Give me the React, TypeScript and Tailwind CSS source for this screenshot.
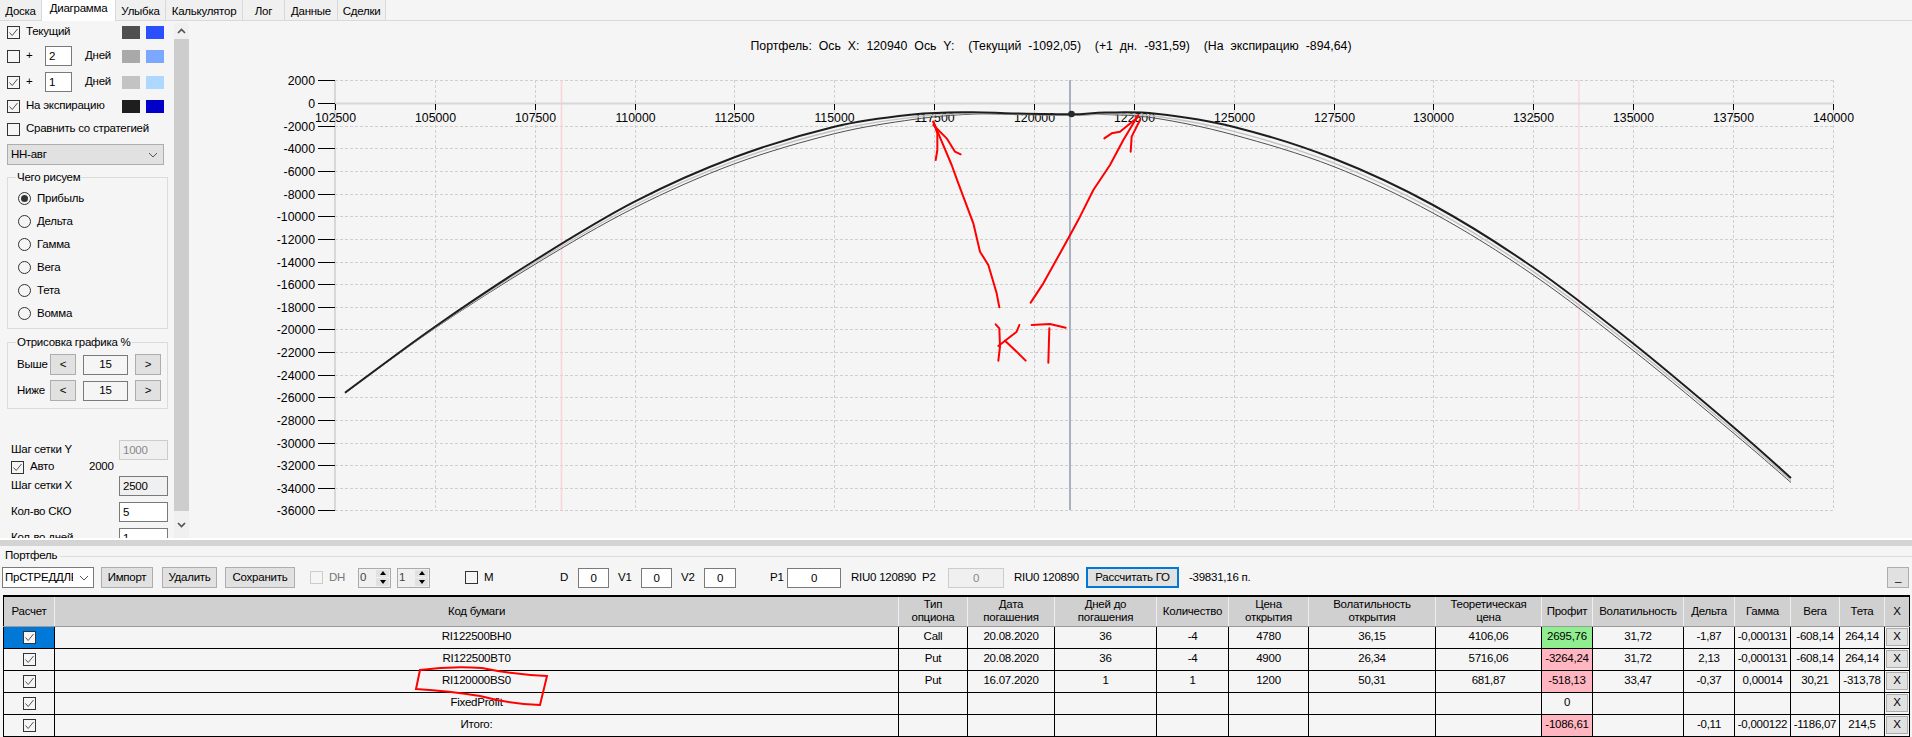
const tabs = [
  { label: 'Доска', className: 'w-[42px]' },
  { label: 'Диаграмма', className: 'w-[74px]', active: true },
  { label: 'Улыбка', className: 'w-[50px]' },
  { label: 'Калькулятор', className: 'w-[77px]' },
  { label: 'Лог', className: 'w-[42px]' },
  { label: 'Данные', className: 'w-[53px]' },
  { label: 'Сделки', className: 'w-[48px]' },
];

// page coordinates of the expiry curve: x, y, offset of the "current" curve below it
const curve = [
  [345, 392.7, 0.5], [435, 326.7, 1.5], [535.5, 260, 4], [634.6, 201.7, 6], [734.5, 157.3, 6.5], [834.4, 126.7, 7],
  [913, 114.5, 5], [970, 112.2, 2], [1013, 113.5, 1], [1071, 114.3, 1], [1106, 112.6, 2], [1156, 113.8, 4.5],
  [1233, 126.7, 8], [1333, 158.3, 8], [1433, 205, 8], [1533, 267.3, 7.5], [1633, 343.3, 7], [1733, 426.7, 6],
  [1791, 478, 4.5],
];

function smoothPath(k: number) {
  const p = curve.map(([x, y, d]) => [x, y + d * k]);
  let d = `M${p[0][0]} ${p[0][1]}`;
  for (let i = 0; i < p.length - 1; i++) {
    const a = p[i - 1] ?? p[i];
    const b = p[i];
    const c = p[i + 1];
    const e = p[i + 2] ?? c;
    d += ` C${b[0] + (c[0] - a[0]) / 6} ${b[1] + (c[1] - a[1]) / 6} ${c[0] - (e[0] - b[0]) / 6} ${c[1] - (e[1] - b[1]) / 6} ${c[0]} ${c[1]}`;
  }
  return d;
}

const yTicks = [80, 103, 126, 148, 171, 194, 216, 239, 262, 284, 307, 329, 352, 375, 397, 420, 443, 465, 488, 510];
const xTicks = Array.from({ length: 16 }, (_, i) => ({
  x: Math.round(335 + i * 99.85),
  label: 102500 + i * 2500,
}));

// freehand marks, in 3x crop coordinates around (880, 70)
const marks = [
  [[358, 712], [350, 670], [325, 585], [300, 545], [280, 460], [235, 340], [215, 285], [160, 155]],
  [[160, 155], [172, 190], [172, 240], [167, 270]],
  [[160, 165], [200, 205], [225, 245], [242, 253]],
  [[452, 698], [490, 640], [565, 505], [600, 440], [640, 360], [690, 285], [730, 210], [775, 135]],
  [[775, 140], [720, 185], [695, 190], [673, 205]],
  [[780, 150], [755, 200], [752, 245]],
  [[347, 763], [358, 775], [360, 830], [355, 872]],
  [[418, 765], [410, 785], [355, 828]],
  [[375, 812], [410, 845], [437, 872]],
  [[455, 765], [510, 762], [557, 773]],
  [[508, 775], [505, 878]],
];

function Chart() {
  return (
    <svg viewBox="190 71 1722 467" className="h-[467px] w-[1722px] text-[12.3px] tracking-normal">
      {yTicks.map((y, i) =>
        i === 1 ? null : <line key={y} x1="335" x2="1833" y1={y + 0.5} y2={y + 0.5} stroke="#cfcfcf" strokeDasharray="3 2" />
      )}
      {xTicks.map((t) => (
        <line key={t.x} x1={t.x + 0.5} x2={t.x + 0.5} y1="80" y2="510" stroke="#cfcfcf" strokeDasharray="3 2" />
      ))}
      <line x1="561.5" x2="561.5" y1="80" y2="510" stroke="#f8d3d8" strokeWidth="1.5" />
      <line x1="1579" x2="1579" y1="80" y2="510" stroke="#f8d3d8" strokeWidth="1.2" />
      <line x1="335" x2="335" y1="80" y2="510" stroke="#d8d8d8" strokeWidth="2" />
      <line x1="335" x2="1833" y1="103.5" y2="103.5" stroke="#d8d8d8" strokeWidth="2" />
      {yTicks.map((y, i) => (
        <g key={y}>
          <line x1="318" x2="335" y1={y + 0.5} y2={y + 0.5} stroke="#000" />
          <text x="315" y={y + 4.5} textAnchor="end" fill="#000">{2000 - i * 2000}</text>
        </g>
      ))}
      {xTicks.map((t) => (
        <g key={t.label}>
          <line x1={t.x + 0.5} x2={t.x + 0.5} y1="104" y2="110" stroke="#000" />
          <text x={t.x + 0.5} y="121.5" textAnchor="middle" fill="#000">{t.label}</text>
        </g>
      ))}
      <path d={smoothPath(1)} fill="none" stroke="#505050" strokeWidth="1" />
      <path d={smoothPath(0.55)} fill="none" stroke="#c3c3c3" strokeWidth="1.4" />
      <path d={smoothPath(0)} fill="none" stroke="#1e1e1e" strokeWidth="2" />
      <line x1="1070" x2="1070" y1="80" y2="510" stroke="#a9b0c0" strokeWidth="2" />
      <circle cx="1071.5" cy="114" r="3.3" fill="#2a2a2a" />
      {marks.map((m, i) => (
        <polyline
          key={i}
          points={m.map(([x, y]) => `${880 + x / 3},${70 + y / 3}`).join(' ')}
          fill="none"
          stroke="#ff0000"
          strokeWidth="2"
          strokeLinecap="round"
          strokeLinejoin="round"
        />
      ))}
    </svg>
  );
}

function Check({ checked = false, disabled = false, className = '' }: { checked?: boolean; disabled?: boolean; className?: string }) {
  return (
    <span
      className={`inline-flex h-[13px] w-[13px] shrink-0 items-center justify-center border ${
        disabled ? 'border-[#cccccc]' : 'border-[#333333]'
      } ${className}`}
    >
      {checked && (
        <svg viewBox="0 0 11 11" className="h-[11px] w-[11px]">
          <path d="M1.5 5.5 L4.2 8.5 L9.5 2" fill="none" stroke="#555555" strokeWidth="1" />
        </svg>
      )}
    </span>
  );
}

function Swatches({ dark, blue }: { dark: string; blue: string }) {
  return (
    <span className="ml-auto flex gap-[6px]">
      <span className={`h-[13px] w-[18px] ${dark}`} />
      <span className={`h-[13px] w-[18px] ${blue}`} />
    </span>
  );
}

function Field({ value, className = '' }: { value: string; className?: string }) {
  return (
    <input
      readOnly
      value={value}
      className={`h-[20px] border border-[#7a7a7a] bg-white px-[3px] outline-none ${className}`}
    />
  );
}

function Btn({ children, className = '' }: { children: React.ReactNode; className?: string }) {
  return (
    <button className={`flex h-[21px] shrink-0 items-center justify-center border border-[#adadad] bg-[#e1e1e1] ${className}`}>
      {children}
    </button>
  );
}

function Radio({ label, checked = false }: { label: string; checked?: boolean }) {
  return (
    <div className="flex h-[23px] items-center pl-[10px]">
      <span className="flex h-[13px] w-[13px] items-center justify-center rounded-full border border-[#333333]">
        {checked && <span className="h-[7px] w-[7px] rounded-full bg-[#333333]" />}
      </span>
      <span className="ml-[6px]">{label}</span>
    </div>
  );
}

function Group({ title, className, children }: { title: string; className: string; children: React.ReactNode }) {
  return (
    <div className={`relative ml-[7px] w-[161px] border border-[#dcdcdc] ${className}`}>
      <span className="absolute left-[8px] top-[-9px] bg-[#f5f5f5] px-px leading-[16px]">{title}</span>
      {children}
    </div>
  );
}

function Percent({ label, className }: { label: string; className: string }) {
  return (
    <div className={`flex items-center pl-[9px] ${className}`}>
      <span className="w-[33px]">{label}</span>
      <Btn className="w-[26px]">&lt;</Btn>
      <span className="ml-[7px] flex h-[20px] w-[45px] items-center justify-center border border-[#7a7a7a]">15</span>
      <Btn className="ml-[7px] w-[26px]">&gt;</Btn>
    </div>
  );
}

function Sidebar() {
  return (
    <div className="flex w-[190px] shrink-0">
      <div className="h-[517px] w-[174px] shrink-0 overflow-hidden pt-px">
        <div className="flex h-[20px] items-center pl-[7px] pr-[10px]">
          <Check checked />
          <span className="ml-[6px]">Текущий</span>
          <Swatches dark="bg-[#505050]" blue="bg-[#2a4fff]" />
        </div>
        <div className="mt-[4px] flex h-[20px] items-center pl-[7px] pr-[10px]">
          <Check />
          <span className="ml-[6px] w-[19px]">+</span>
          <Field value="2" className="w-[27px]" />
          <span className="ml-[13px]">Дней</span>
          <Swatches dark="bg-[#a9a9a9]" blue="bg-[#7ba7ff]" />
        </div>
        <div className="mt-[6px] flex h-[20px] items-center pl-[7px] pr-[10px]">
          <Check checked />
          <span className="ml-[6px] w-[19px]">+</span>
          <Field value="1" className="w-[27px]" />
          <span className="ml-[13px]">Дней</span>
          <Swatches dark="bg-[#c3c3c3]" blue="bg-[#add8ff]" />
        </div>
        <div className="mt-[4px] flex h-[20px] items-center pl-[7px] pr-[10px]">
          <Check checked />
          <span className="ml-[6px]">На экспирацию</span>
          <Swatches dark="bg-[#1e1e1e]" blue="bg-[#0000c8]" />
        </div>
        <div className="mt-[3px] flex h-[20px] items-center pl-[7px]">
          <Check />
          <span className="ml-[6px]">Сравнить со стратегией</span>
        </div>
        <div className="ml-[7px] mt-[5px] flex h-[21px] w-[157px] items-center justify-between border border-[#adadad] bg-[#e1e1e1] pl-[3px] pr-[5px]">
          <span>НН-авг</span>
          <svg viewBox="0 0 10 6" className="h-[6px] w-[10px]">
            <path d="M1 1 L5 5 L9 1" fill="none" stroke="#555555" />
          </svg>
        </div>
        <Group title="Чего рисуем" className="mt-[12px] h-[152px] pt-[9px]">
          <Radio label="Прибыль" checked />
          <Radio label="Дельта" />
          <Radio label="Гамма" />
          <Radio label="Вега" />
          <Radio label="Тета" />
          <Radio label="Вомма" />
        </Group>
        <Group title="Отрисовка графика %" className="mt-[13px] h-[67px] pt-[11px]">
          <Percent label="Выше" className="" />
          <Percent label="Ниже" className="mt-[5px]" />
        </Group>
        <div className="ml-[11px] mt-[31px] flex h-[20px] w-[157px] items-center justify-between">
          <span>Шаг сетки Y</span>
          <input readOnly value="1000" className="h-[20px] w-[49px] border border-[#cccccc] bg-[#f0f0f0] px-[3px] text-[#888888] outline-none" />
        </div>
        <div className="ml-[11px] mt-[-2px] flex h-[18px] items-center">
          <Check checked />
          <span className="ml-[6px] w-[59px]">Авто</span>
          <span>2000</span>
        </div>
        <div className="ml-[11px] flex h-[20px] w-[157px] items-center justify-between">
          <span>Шаг сетки X</span>
          <Field value="2500" className="w-[49px] !bg-[#f0f0f0]" />
        </div>
        <div className="ml-[11px] mt-[6px] flex h-[20px] w-[157px] items-center justify-between">
          <span>Кол-во СКО</span>
          <Field value="5" className="w-[49px]" />
        </div>
        <div className="ml-[11px] mt-[6px] flex h-[20px] w-[157px] items-center justify-between">
          <span>Кол-во дней</span>
          <Field value="1" className="w-[49px]" />
        </div>
      </div>
      <div className="mt-[2px] flex h-[515px] w-[15px] flex-col bg-[#f0f0f0]">
        <div className="flex h-[16px] items-center justify-center">
          <svg viewBox="0 0 9 6" className="h-[6px] w-[9px]">
            <path d="M1 5 L4.5 1.5 L8 5" fill="none" stroke="#505050" strokeWidth="1.6" />
          </svg>
        </div>
        <div className="h-[472px] bg-[#cdcdcd]" />
        <div className="flex flex-1 items-center justify-center">
          <svg viewBox="0 0 9 6" className="h-[6px] w-[9px]">
            <path d="M1 1 L4.5 4.5 L8 1" fill="none" stroke="#505050" strokeWidth="1.6" />
          </svg>
        </div>
      </div>
    </div>
  );
}

function Spin({ value, className = '' }: { value: string; className?: string }) {
  return (
    <span className={`flex h-[20px] w-[33px] shrink-0 items-center justify-between border border-[#aaaaaa] bg-[#f0f0f0] pl-px ${className}`}>
      <span className="text-[#444444]">{value}</span>
      <span className="flex h-full w-[15px] flex-col gap-px p-px">
        <span className="flex flex-1 items-center justify-center bg-[#e1e1e1]">
          <span className="h-0 w-0 border-x-[3px] border-b-[4px] border-x-transparent border-b-black" />
        </span>
        <span className="flex flex-1 items-center justify-center bg-[#e1e1e1]">
          <span className="h-0 w-0 border-x-[3px] border-t-[4px] border-x-transparent border-t-black" />
        </span>
      </span>
    </span>
  );
}

function Toolbar() {
  return (
    <div className="flex h-[23px] items-center">
      <div className="ml-[2px] flex h-[21px] w-[92px] shrink-0 items-center justify-between border border-[#7a7a7a] bg-white pl-[2px] pr-[4px]">
        <span className="w-[68px] overflow-hidden whitespace-nowrap">ПрСТРЕДДЛЕ</span>
        <svg viewBox="0 0 10 6" className="h-[6px] w-[10px] shrink-0">
          <path d="M1 1 L5 5 L9 1" fill="none" stroke="#555555" />
        </svg>
      </div>
      <Btn className="ml-[7px] w-[52px]">Импорт</Btn>
      <Btn className="ml-[9px] w-[55px]">Удалить</Btn>
      <Btn className="ml-[8px] w-[70px]">Сохранить</Btn>
      <Check disabled className="ml-[15px]" />
      <span className="ml-[6px] w-[20px] text-[#777777]">DH</span>
      <Spin value="0" className="ml-[9px]" />
      <Spin value="1" className="ml-[6px]" />
      <Check className="ml-[35px]" />
      <span className="ml-[6px] w-[10px]">M</span>
      <span className="ml-[66px] w-[10px]">D</span>
      <Field value="0" className="ml-[8px] w-[31px] text-center" />
      <span className="ml-[9px] w-[16px]">V1</span>
      <Field value="0" className="ml-[7px] w-[31px] text-center" />
      <span className="ml-[9px] w-[16px]">V2</span>
      <Field value="0" className="ml-[7px] w-[32px] text-center" />
      <span className="ml-[34px] w-[12px]">P1</span>
      <Field value="0" className="ml-[5px] w-[54px] text-center" />
      <span className="ml-[10px] w-[64px] whitespace-nowrap">RIU0 120890</span>
      <span className="ml-[7px] w-[14px]">P2</span>
      <input readOnly value="0" className="ml-[12px] h-[20px] w-[56px] border border-[#cccccc] bg-[#f0f0f0] text-center text-[#888888] outline-none" />
      <span className="ml-[10px] w-[64px] whitespace-nowrap">RIU0 120890</span>
      <Btn className="ml-[8px] w-[93px] border-2 !border-[#0078d7]">Рассчитать ГО</Btn>
      <span className="ml-[10px] w-[62px] whitespace-nowrap">-39831,16 п.</span>
      <Btn className="ml-auto mr-[3px] w-[22px] items-end pb-[1px]">_</Btn>
    </div>
  );
}

const columns = [
  { title: ['Расчет'], className: 'w-[51px]' },
  { title: ['Код бумаги'], className: 'w-[844px]' },
  { title: ['Тип', 'опциона'], className: 'w-[69px]' },
  { title: ['Дата', 'погашения'], className: 'w-[87px]' },
  { title: ['Дней до', 'погашения'], className: 'w-[102px]' },
  { title: ['Количество'], className: 'w-[72px]' },
  { title: ['Цена', 'открытия'], className: 'w-[80px]' },
  { title: ['Волатильность', 'открытия'], className: 'w-[127px]' },
  { title: ['Теоретическая', 'цена'], className: 'w-[106px]' },
  { title: ['Профит'], className: 'w-[51px]' },
  { title: ['Волатильность'], className: 'w-[91px]' },
  { title: ['Дельта'], className: 'w-[51px]' },
  { title: ['Гамма'], className: 'w-[56px]' },
  { title: ['Вега'], className: 'w-[49px]' },
  { title: ['Тета'], className: 'w-[45px]' },
  { title: ['X'], className: 'w-[25px]' },
];

const rows = [
  ['RI122500BH0', 'Call', '20.08.2020', '36', '-4', '4780', '36,15', '4106,06', '2695,76', '31,72', '-1,87', '-0,000131', '-608,14', '264,14'],
  ['RI122500BT0', 'Put', '20.08.2020', '36', '-4', '4900', '26,34', '5716,06', '-3264,24', '31,72', '2,13', '-0,000131', '-608,14', '264,14'],
  ['RI120000BS0', 'Put', '16.07.2020', '1', '1', '1200', '50,31', '681,87', '-518,13', '33,47', '-0,37', '0,00014', '30,21', '-313,78'],
  ['FixedProfit', '', '', '', '', '', '', '', '0', '', '', '', '', ''],
  ['Итого:', '', '', '', '', '', '', '', '-1086,61', '', '-0,11', '-0,000122', '-1186,07', '214,5'],
];

function profitClass(value: string) {
  if (value === '0') return '';
  return value.startsWith('-') ? 'bg-[#ffb6c1]' : 'bg-[#90ee90]';
}

function PortfolioTable() {
  return (
    <table className="ml-[3px] mt-[6px] w-[1906px] table-fixed border-collapse whitespace-nowrap text-center">
      <colgroup>
        {columns.map((c) => (
          <col key={c.title.join()} className={c.className} />
        ))}
      </colgroup>
      <thead>
        <tr className="h-[30px] bg-[#d0d0d0]">
          {columns.map((c) => (
            <th
              key={c.title.join()}
              className="border-b border-r border-t-2 border-b-[#9a9a9a] border-r-[#efefef] border-t-black p-0 font-normal leading-[13px] first:border-l first:border-l-black last:border-r-black"
            >
              {c.title.map((line) => (
                <div key={line}>{line}</div>
              ))}
            </th>
          ))}
        </tr>
      </thead>
      <tbody>
        {rows.map((row, r) => (
          <tr key={row[0]} className="h-[22px]">
            <td className={`border border-black p-0 ${r === 0 ? 'bg-[#0078d7]' : ''}`}>
              <span className="flex items-center justify-center">
                <Check checked className={r === 0 ? 'bg-[#f5f5f5]' : ''} />
              </span>
            </td>
            {row.map((cell, i) => (
              <td key={i} className={`border border-black p-0 ${i === 8 ? profitClass(cell) : ''}`}>
                {cell}
              </td>
            ))}
            <td className="border border-black p-px">
              <span className="flex h-[18px] items-center justify-center border border-[#adadad] bg-[#e1e1e1]">X</span>
            </td>
          </tr>
        ))}
      </tbody>
    </table>
  );
}

export default function App() {
  return (
    <div className="relative h-[737px] w-[1912px] overflow-hidden bg-[#f5f5f5] font-['Liberation_Sans',sans-serif] text-[11.5px] tracking-[-0.25px] text-black">
      <div className="flex h-[21px] border-b border-[#d9d9d9]">
        {tabs.map((tab) => (
          <div
            key={tab.label}
            className={`flex items-center justify-center border-r border-[#d9d9d9] ${tab.className} ${
              tab.active ? 'h-[21px] bg-white pb-[4px]' : 'h-[20px] bg-[#f0f0f0] pt-[3px]'
            }`}
          >
            {tab.label}
          </div>
        ))}
      </div>
      <div className="flex h-[517px]">
        <Sidebar />
        <div className="flex-1 overflow-hidden">
          <div className="flex h-[50px] items-center justify-center whitespace-pre text-[12.3px] tracking-normal [word-spacing:3.5px]">
            Портфель: Ось X: 120940 Ось Y:  (Текущий -1092,05)  (+1 дн. -931,59)  (На экспирацию -894,64)
          </div>
          <Chart />
        </div>
      </div>
      <div className="h-[2px] bg-white" />
      <div className="h-[6px] bg-[#d4d4d4]" />
      <div className="flex h-[20px] items-center pl-[5px]">
        <span>Портфель</span>
        <span className="ml-[3px] h-px flex-1 bg-[#dcdcdc]" />
      </div>
      <Toolbar />
      <PortfolioTable />
      {/* red marker around the third row */}
      <svg viewBox="0 0 1912 737" className="pointer-events-none absolute left-0 top-0 h-[737px] w-[1912px]">
        <path
          d="M420 670 Q450 666 482 668 Q510 674 547 676 L540 705 Q510 704 480 696 Q450 691 416 689 Z"
          fill="none"
          stroke="#ff0000"
          strokeWidth="2"
        />
      </svg>
    </div>
  );
}
